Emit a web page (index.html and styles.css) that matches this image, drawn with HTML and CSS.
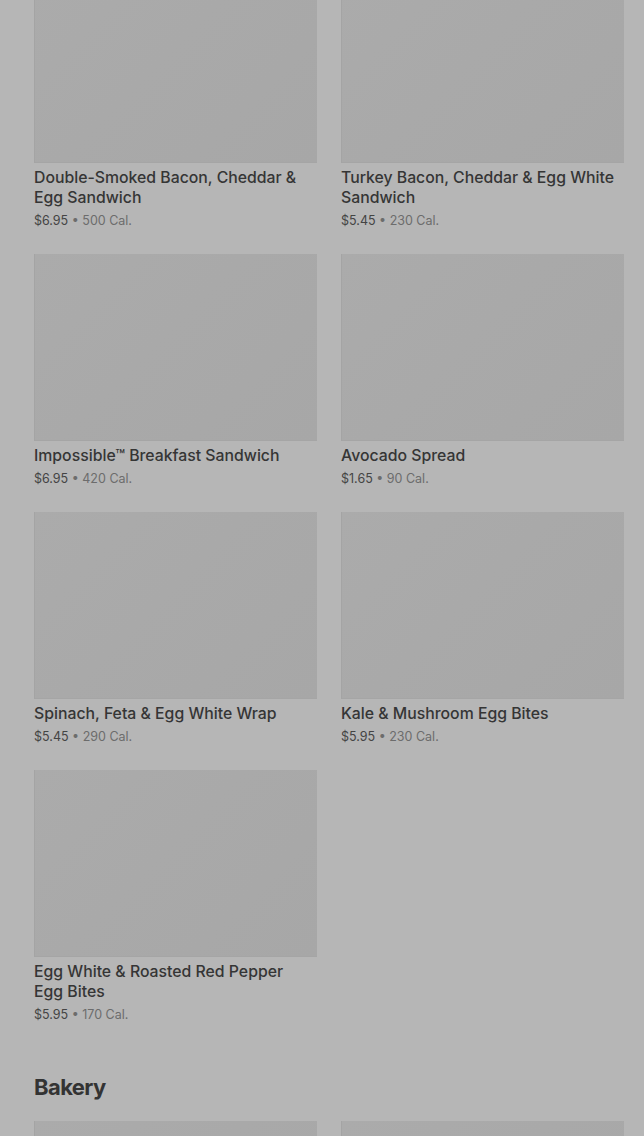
FILE: index.html
```html
<!DOCTYPE html>
<html>
<head>
<meta charset="utf-8">
<link rel="stylesheet" href="styles.css">
</head>
<body>
<main class="page">
  <section class="grid">
    <article class="item"><div class="thumb"></div><h3 class="name">Double-Smoked Bacon, Cheddar &amp; Egg Sandwich</h3><p class="meta"><span class="price">$6.95</span> • 500 Cal.</p></article>
    <article class="item"><div class="thumb"></div><h3 class="name">Turkey Bacon, Cheddar &amp; Egg White Sandwich</h3><p class="meta"><span class="price">$5.45</span> • 230 Cal.</p></article>
    <article class="item"><div class="thumb"></div><h3 class="name">Impossible™ Breakfast Sandwich</h3><p class="meta"><span class="price">$6.95</span> • 420 Cal.</p></article>
    <article class="item"><div class="thumb"></div><h3 class="name">Avocado Spread</h3><p class="meta"><span class="price">$1.65</span> • 90 Cal.</p></article>
    <article class="item"><div class="thumb"></div><h3 class="name">Spinach, Feta &amp; Egg White Wrap</h3><p class="meta"><span class="price">$5.45</span> • 290 Cal.</p></article>
    <article class="item"><div class="thumb"></div><h3 class="name">Kale &amp; Mushroom Egg Bites</h3><p class="meta"><span class="price">$5.95</span> • 230 Cal.</p></article>
    <article class="item"><div class="thumb"></div><h3 class="name">Egg White &amp; Roasted Red Pepper Egg Bites</h3><p class="meta"><span class="price">$5.95</span> • 170 Cal.</p></article>
  </section>
  <h2 class="section-title">Bakery</h2>
  <section class="grid">
    <article class="item"><div class="thumb"></div></article>
    <article class="item"><div class="thumb"></div></article>
  </section>
</main>
</body>
</html>
```
FILE: styles.css
```css
html, body {
  margin: 0;
  padding: 0;
  background: #b6b6b6;
  height: 100%;
  overflow: hidden;
}
body {
  font-family: Inter, "Noto Sans", sans-serif;
  color: #3a3a3a;
}
.page {
  padding: 0 20px 0 34px;
  margin-top: -24px;
}
.grid {
  display: grid;
  grid-template-columns: 283px 283px;
  column-gap: 24px;
  row-gap: 0;
}
.item {
  padding-bottom: 25px;
}
.thumb {
  height: 187px;
  background: linear-gradient(135deg, #ababab 0%, #a9a9a9 45%, #a7a7a7 100%);
  box-shadow: inset 1px 0 0 #a4a4a4, inset 0 -1px 0 #a5a5a5;
}
.name {
  margin: 5px 0 0;
  padding-right: 4px;
  font-size: 15.8px;
  line-height: 20px;
  font-weight: 500;
  color: #353535;
  letter-spacing: 0;
}
.meta {
  margin: 5px 0 0;
  font-size: 12.5px;
  line-height: 16px;
  color: #6c6c6c;
}
.price {
  color: #444444;
}
.section-title {
  margin: 26px 0 21px;
  font-size: 22px;
  line-height: 26px;
  font-weight: 700;
  letter-spacing: -0.6px;
  color: #333333;
}
```
